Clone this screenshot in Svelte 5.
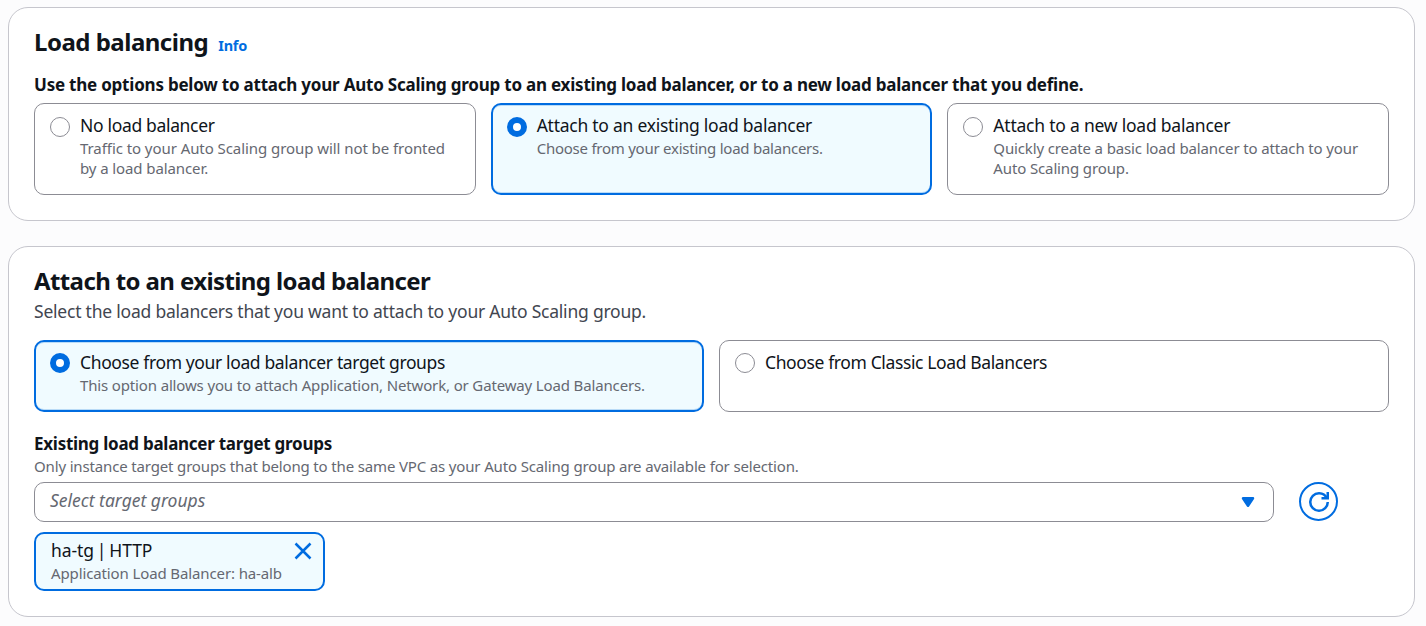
<script>
  const placement = [
    {
      label: 'No load balancer', track: -0.33, selected: false,
      lines: [
        ['Traffic to your Auto Scaling group will not be fronted', -0.065],
        ['by a load balancer.', -0.1]
      ]
    },
    {
      label: 'Attach to an existing load balancer', track: -0.25, selected: true,
      lines: [['Choose from your existing load balancers.', -0.245]]
    },
    {
      label: 'Attach to a new load balancer', track: -0.22, selected: false,
      lines: [
        ['Quickly create a basic load balancer to attach to your', -0.132],
        ['Auto Scaling group.', -0.13]
      ]
    }
  ];

  const sources = [
    {
      label: 'Choose from your load balancer target groups', track: -0.37, selected: true,
      lines: [['This option allows you to attach Application, Network, or Gateway Load Balancers.', -0.147]]
    },
    { label: 'Choose from Classic Load Balancers', track: -0.38, selected: false, lines: [] }
  ];
</script>

{#snippet tile(option)}
  <div class="tile" class:selected={option.selected}>
    <span class="radio"></span>
    <div class="tile-body">
      <div class="label" style:letter-spacing="{option.track}px">{option.label}</div>
      {#each option.lines as [line, track]}
        <div class="hint" style:letter-spacing="{track}px">{line}</div>
      {/each}
    </div>
  </div>
{/snippet}

<main>
  <section class="card first">
    <header>
      <h2>Load balancing</h2>
      <a class="info" href="#info">Info</a>
    </header>
    <div class="field-label intro">Use the options below to attach your Auto Scaling group to an existing load balancer, or to a new load balancer that you define.</div>
    <div class="tiles three">
      {#each placement as option}{@render tile(option)}{/each}
    </div>
  </section>

  <section class="card second">
    <h2 class="attach">Attach to an existing load balancer</h2>
    <p class="description">Select the load balancers that you want to attach to your Auto Scaling group.</p>
    <div class="tiles two">
      {#each sources as option}{@render tile(option)}{/each}
    </div>

    <div class="field-label groups">Existing load balancer target groups</div>
    <div class="hint constraint">Only instance target groups that belong to the same VPC as your Auto Scaling group are available for selection.</div>
    <div class="select-row">
      <div class="select">
        <span>Select target groups</span>
        <svg width="20" height="20" viewBox="0 0 16 16">
          <path d="M4 5h8l-4 6-4-6z" fill="#006ce0" stroke="#006ce0" stroke-width="2" stroke-linejoin="round" />
        </svg>
      </div>
      <button class="refresh" aria-label="Refresh">
        <svg width="20" height="20" viewBox="0 0 16 16" fill="none" stroke="#006ce0" stroke-width="2">
          <path d="M10 5h5V0" />
          <path d="M15 8a6.957 6.957 0 0 1-7 7 6.957 6.957 0 0 1-7-7 6.957 6.957 0 0 1 7-7 6.87 6.87 0 0 1 6.3 4" />
        </svg>
      </button>
    </div>
    <div class="token">
      <div>
        <div class="label token-name">ha-tg | HTTP</div>
        <div class="hint token-hint">Application Load Balancer: ha-alb</div>
      </div>
      <svg width="20" height="20" viewBox="0 0 16 16" fill="none" stroke="#006ce0" stroke-width="2">
        <path d="m2 2 12 12M14 2 2 14" />
      </svg>
    </div>
  </section>
</main>

<style>
  :global(body) {
    background: #fcfcfd;
    overflow: hidden;
  }
  main {
    box-sizing: border-box;
    height: 626px;
    padding: 7px 11px 0 8px;
    display: flex;
    flex-direction: column;
    gap: 25px;
    font-family: "Noto Sans", "Open Sans", sans-serif;
    font-size: 17.5px;
    line-height: 25px;
    color: #0f141a;
  }
  .card {
    box-sizing: border-box;
    border: 1px solid #c6c6cd;
    border-radius: 20px;
    background: #fff;
    padding: 0 25px;
  }
  .first {
    height: 214px;
    padding-top: 19px;
  }
  .second {
    height: 371px;
    padding-top: 19px;
  }
  header {
    display: flex;
    align-items: baseline;
    gap: 10px;
  }
  h2 {
    margin: 0;
    font-size: 24px;
    line-height: 30px;
    font-weight: 700;
    letter-spacing: -0.5px;
  }
  .attach {
    letter-spacing: -0.61px;
  }
  .info {
    color: #006ce0;
    font-size: 14.5px;
    line-height: 20px;
    font-weight: 700;
    letter-spacing: -0.2px;
    text-decoration: none;
  }
  .field-label {
    font-size: 17px;
    font-weight: 700;
    letter-spacing: -0.22px;
    white-space: nowrap;
  }
  .intro {
    margin: 15px 0 6px;
  }
  .groups {
    margin-top: 19px;
    letter-spacing: -0.265px;
  }
  .description {
    margin: 3px 0 16px;
    color: #424650;
    letter-spacing: -0.22px;
  }
  .tiles {
    display: grid;
    gap: 15px;
  }
  .three {
    grid-template-columns: repeat(3, 1fr);
    height: 92px;
  }
  .two {
    grid-template-columns: repeat(2, 1fr);
    height: 72px;
  }
  .tile {
    box-sizing: border-box;
    display: flex;
    gap: 10px;
    border: 1px solid #8c8c94;
    border-radius: 10px;
    padding: 9px 0 0 15px;
  }
  .tile.selected {
    border: 2px solid #006ce0;
    background: #f0fbff;
    padding: 8px 0 0 14px;
    box-shadow: inset 0 1px #b9dbf7, inset 0 -1px #b9dbf7;
  }
  .radio {
    box-sizing: border-box;
    flex: none;
    width: 20px;
    height: 20px;
    margin-top: 4px;
    border: 1px solid #8c8c94;
    border-radius: 50%;
    background: #fff;
  }
  .two .radio {
    margin-top: 3px;
  }
  .selected .radio {
    border: 6px solid #006ce0;
  }
  .label,
  .hint {
    white-space: nowrap;
  }
  .hint {
    font-size: 15px;
    line-height: 20px;
    color: #656871;
  }
  .constraint {
    letter-spacing: -0.153px;
  }
  .select-row {
    display: flex;
    align-items: flex-start;
    gap: 25px;
    margin-top: 6px;
  }
  .select {
    box-sizing: border-box;
    width: 1240px;
    height: 40px;
    display: flex;
    align-items: center;
    justify-content: space-between;
    border: 1px solid #8c8c94;
    border-radius: 10px;
    padding: 0 15px;
    color: #656871;
    font-style: italic;
  }
  .select span {
    padding-bottom: 3px;
  }
  .refresh {
    box-sizing: border-box;
    width: 39px;
    height: 39px;
    padding: 0;
    display: grid;
    place-items: center;
    border: 2px solid #006ce0;
    border-radius: 50%;
    background: #fff;
  }
  svg {
    display: block;
    flex: none;
  }
  .token {
    box-sizing: border-box;
    width: 291px;
    height: 59px;
    margin-top: 10px;
    padding: 4px 10px 0 15px;
    display: flex;
    justify-content: space-between;
    border: 2px solid #006ce0;
    border-radius: 10px;
    background: #f0fbff;
  }
  .token svg {
    margin-top: 3px;
  }
  .token-name {
    letter-spacing: -0.1px;
    word-spacing: -1.5px;
  }
  .token-hint {
    letter-spacing: -0.12px;
  }
</style>
